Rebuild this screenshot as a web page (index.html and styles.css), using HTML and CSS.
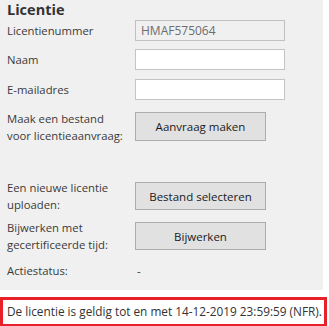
FILE: index.html
```html
<!DOCTYPE html>
<html lang="nl">
<head>
    <meta charset="UTF-8">
    <title>Licentie</title>
    <link rel="stylesheet" href="styles.css">
</head>
<body>
    <div class="panel">
        <div class="title">Licentie</div>

        <div class="row row-field">
            <div class="label">Licentienummer</div>
            <div class="field field-disabled">HMAF575064</div>
        </div>
        <div class="row row-field row-naam">
            <div class="label">Naam</div>
            <div class="field"></div>
        </div>
        <div class="row row-field row-mail">
            <div class="label">E-mailadres</div>
            <div class="field"></div>
        </div>
        <div class="row row-aanvraag">
            <div class="label">Maak een bestand<br>voor licentieaanvraag:</div>
            <button class="btn btn-tall">Aanvraag maken</button>
        </div>
        <div class="row row-upload">
            <div class="label">Een nieuwe licentie<br>uploaden:</div>
            <button class="btn">Bestand selecteren</button>
        </div>
        <div class="row row-bijwerken">
            <div class="label">Bijwerken met<br>gecertificeerde tijd:</div>
            <button class="btn">Bijwerken</button>
        </div>
        <div class="row row-status">
            <div class="label">Actiestatus:</div>
            <div class="value">-</div>
        </div>
    </div>

    <div class="notice">De licentie is geldig tot en met 14-12-2019 23:59:59 (NFR).</div>
</body>
</html>
```

FILE: styles.css
```css
* {
    margin: 0;
    padding: 0;
    box-sizing: border-box;
}

body {
    font-family: 'Open Sans', 'Noto Sans', sans-serif;
    font-size: 11.3px;
    color: #333333;
    background: #ffffff;
    width: 329px;
    height: 326px;
    overflow: hidden;
}

.panel {
    background: #f0f0f0;
    width: 323px;
    height: 290px;
    padding-left: 7px;
}

.title {
    font-size: 14.5px;
    font-weight: bold;
    line-height: 20px;
    height: 20px;
    color: #333333;
}

.row {
    display: flex;
    align-items: center;
}

.row-field {
    height: 21px;
}

.row-naam {
    margin-top: 8px;
}

.row-mail {
    margin-top: 9px;
}

.row-aanvraag {
    height: 29px;
    margin-top: 12px;
}

.row-upload {
    height: 28px;
    margin-top: 41px;
}

.row-bijwerken {
    height: 28px;
    margin-top: 12px;
}

.row-status {
    height: 16px;
    margin-top: 12px;
}

.label {
    width: 128px;
    line-height: 17px;
    color: #3a3a3a;
    white-space: nowrap;
}

.field {
    width: 150px;
    height: 21px;
    background: #ffffff;
    border: 1px solid #c4c4c4;
    padding: 0 5px;
    line-height: 19px;
    font-size: 12px;
    color: #6d6d6d;
}

.field-disabled {
    background: #f0f0f0;
    border-color: #c0c0c0;
}

.btn {
    width: 131px;
    height: 28px;
    background: #e1e1e1;
    border: 1px solid #adadad;
    font-family: inherit;
    font-size: 11.5px;
    color: #1a1a1a;
}

.btn-tall {
    height: 29px;
}

.value {
    padding-left: 2px;
    line-height: 17px;
}

.notice {
    margin-top: 7px;
    width: 327px;
    height: 29px;
    border: 3px solid #e8202a;
    border-bottom-width: 2px;
    background: #ffffff;
    padding-left: 4px;
    line-height: 23px;
    font-size: 11.8px;
    white-space: nowrap;
    color: #333333;
}
```
